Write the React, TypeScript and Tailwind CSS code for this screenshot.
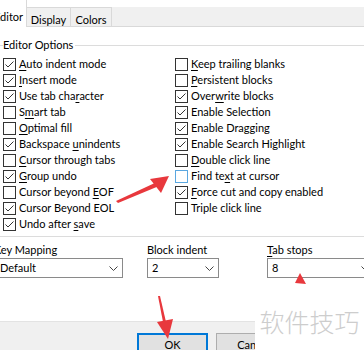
import React from "react";

const leftOptions: [string, boolean][] = [
  ["&Auto indent mode", true],
  ["&Insert mode", true],
  ["Use tab cha&racter", true],
  ["S&mart tab", false],
  ["&Optimal fill", false],
  ["Backspace &unindents", true],
  ["&Cursor through tabs", false],
  ["&Group undo", true],
  ["Cursor beyond &EOF", false],
  ["Cursor Beyond EOL", true],
  ["Undo after &save", true],
];

const rightOptions: [string, boolean][] = [
  ["&Keep trailing blanks", false],
  ["&Persistent blocks", false],
  ["Over&write blocks", true],
  ["Enable Selection", true],
  ["Enable Dragging", true],
  ["Enable Search Highlight", true],
  ["&Double click line", false],
  ["Find te&xt at cursor", false],
  ["&Force cut and copy enabled", true],
  ["Triple click line", false],
];

// "&" marks the access key letter
const AccessText = ({ text }: { text: string }) => {
  const i = text.indexOf("&");
  if (i < 0) return <>{text}</>;
  return (
    <>
      {text.slice(0, i)}
      <u className="underline-offset-[2px]">{text[i + 1]}</u>
      {text.slice(i + 2)}
    </>
  );
};

const CheckBox = ({
  label,
  checked,
  hot,
}: {
  label: string;
  checked: boolean;
  hot?: boolean;
}) => {
  return (
    <div className="flex items-center h-4 gap-[3px] whitespace-nowrap">
      <span
        className={`w-[13px] h-[13px] shrink-0 bg-white border flex items-center justify-center ${
          hot ? "border-[#5aa7e0]" : "border-[#333333]"
        }`}
      >
        {checked && (
          <svg width="11" height="11" viewBox="0 0 11 11">
            <polyline
              points="1.5,5.5 4,8 9.5,2.5"
              fill="none"
              stroke="#333"
              strokeWidth="1"
            />
          </svg>
        )}
      </span>
      <span>
        <AccessText text={label} />
      </span>
    </div>
  );
};

const Chevron = () => (
  <svg width="9" height="5" viewBox="0 0 9 5" className="shrink-0">
    <polyline points="0.5,0.5 4.5,4.5 8.5,0.5" fill="none" stroke="#444" strokeWidth="1" />
  </svg>
);

const Combo = ({ value }: { value: string }) => (
  <div className="h-5 border border-[#8a8a8a] bg-white flex items-center justify-between pl-[4px] pr-[4px]">
    <span>{value}</span>
    <Chevron />
  </div>
);

export default function App() {
  return (
    <div className="relative w-[364px] h-[350px] overflow-hidden bg-white text-black text-[11px] leading-4 font-['Lato','Noto_Sans',sans-serif] flex flex-col">
      {/* tabs */}
      <div className="h-[27px] flex shrink-0">
        <div className="w-[27px] h-full bg-white border-r border-[#d9d9d9] overflow-hidden flex items-start pt-[9px]">
          <span className="ml-[-6px]">Editor</span>
        </div>
        <div className="flex-1 mt-[7px] bg-[#f0f0f0] border-b border-[#d9d9d9] flex">
          <div className="w-[44px] border-t border-r border-[#d9d9d9] flex items-start justify-center pt-[4px]">
            Display
          </div>
          <div className="w-[41px] border-t border-r border-[#d9d9d9] flex items-start justify-center pt-[4px]">
            Colors
          </div>
        </div>
      </div>

      {/* editor options group */}
      <fieldset className="mt-[10px] ml-[-4px] w-[380px] border border-[#dcdcdc] pl-[6px] pt-[3px] pb-[4px]">
        <legend className="pr-[2px] leading-4">Editor Options</legend>
        <div className="grid grid-cols-[172px_1fr] grid-rows-[repeat(11,16px)] grid-flow-col">
          {leftOptions.map(([l, c]) => (
            <CheckBox key={l} label={l} checked={c} />
          ))}
          {rightOptions.map(([l, c]) => (
            <CheckBox key={l} label={l} checked={c} hot={l.startsWith("Find")} />
          ))}
        </div>
      </fieldset>

      {/* combos */}
      <div className="mt-[5px] ml-[-5px] flex">
        <div className="w-[128px] shrink-0 flex flex-col">
          <span className="ml-[-1px]">Key Mapping</span>
          <Combo value="Default" />
        </div>
        <div className="ml-[24px] w-[72px] shrink-0 flex flex-col">
          <span>Block indent</span>
          <Combo value="2" />
        </div>
        <div className="ml-[48px] w-[108px] shrink-0 flex flex-col">
          <span>
            <AccessText text="&Tab stops" />
          </span>
          <Combo value="8" />
        </div>
      </div>

      {/* buttons */}
      <div className="mt-auto h-[29px] bg-[#f0f0f0] border-t border-[#e3e3e3] flex pt-[11px] pl-[137px] gap-[8px]">
        <div className="w-[71px] h-[23px] bg-[#e1e1e1] border-2 border-[#0078d7] flex justify-center pt-[2px]">
          OK
        </div>
        <div className="w-[75px] h-[23px] bg-[#e1e1e1] border border-[#adadad] flex justify-center pt-[3px]">
          Cancel
        </div>
      </div>

      {/* watermark */}
      <div className="absolute left-[255px] top-[300px] w-[109px] h-[50px] flex justify-center pt-[6px]">
        <div className="absolute left-0 right-0 bottom-0 top-[21px] bg-white" />
        <span className="relative text-[25px] leading-[30px] text-[#cdcdcd] font-light font-['Noto_Sans_CJK_SC',sans-serif]">
          软件技巧
        </span>
      </div>

      {/* red arrows */}
      <svg className="absolute inset-0 pointer-events-none" width="364" height="350" viewBox="0 0 364 350">
        <polygon points="116,201 157,182 159,186 118,203" fill="#e8383d" />
        <polygon points="169,176 150,179 161,193" fill="#e8383d" />
        <polygon points="158,296 160,296 166,322 163,322" fill="#e8383d" />
        <polygon points="157,322 173,319 168,339" fill="#e8383d" />
        <polygon points="300,273 295,283 306,284" fill="#e8383d" />
      </svg>
    </div>
  );
}
